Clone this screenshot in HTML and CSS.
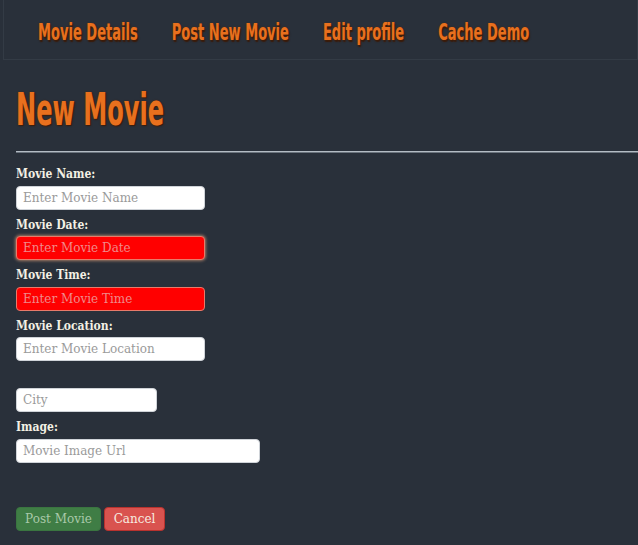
FILE: index.html
```html
<!DOCTYPE html>
<html>
<head>
<meta charset="utf-8">
<link rel="stylesheet" href="styles.css">
</head>
<body>
<nav class="navbar">
  <a class="nav-link"><span>Movie Details</span></a>
  <a class="nav-link"><span>Post New Movie</span></a>
  <a class="nav-link"><span>Edit profile</span></a>
  <a class="nav-link"><span>Cache Demo</span></a>
</nav>
<h1 class="title"><span>New Movie</span></h1>
<hr class="divider">
<form class="movie-form">
  <label class="field-label">Movie Name:</label>
  <input class="field" type="text" placeholder="Enter Movie Name">
  <label class="field-label">Movie Date:</label>
  <input class="field invalid glow" type="text" placeholder="Enter Movie Date">
  <label class="field-label">Movie Time:</label>
  <input class="field invalid" type="text" placeholder="Enter Movie Time">
  <label class="field-label">Movie Location:</label>
  <input class="field" type="text" placeholder="Enter Movie Location">
  <label class="field-label"></label>
  <input class="field city" type="text" placeholder="City">
  <label class="field-label">Image:</label>
  <input class="field wide" type="text" placeholder="Movie Image Url">
  <div class="actions">
    <button type="button" class="btn btn-post">Post Movie</button>
    <button type="button" class="btn btn-cancel">Cancel</button>
  </div>
</form>
</body>
</html>
```
FILE: styles.css
```css
html, body {
  margin: 0;
  padding: 0;
  background: #29303a;
}
body {
  font-family: "DejaVu Serif", "Liberation Serif", serif;
  color: #f1eee2;
  width: 638px;
  overflow: hidden;
}
.navbar {
  margin-left: 3px;
  height: 60px;
  border: 1px solid #333b45;
  border-top: none;
  display: flex;
  align-items: center;
  gap: 34px;
  padding-left: 34px;
  box-sizing: border-box;
}
.nav-link span,
.title span {
  display: inline-block;
  white-space: nowrap;
  font-family: "DejaVu Sans Condensed", "DejaVu Sans", sans-serif;
  font-weight: bold;
  color: #e8701e;
  text-shadow: 0 0 1px #5c2806, 1px 1px 1px #3a1a08;
}
.nav-link span {
  font-size: 14.5px;
  line-height: 24px;
  transform: scaleY(1.62);
  margin-top: 5px;
}
.title {
  margin: 30px 0 0 16px;
  font-size: 26.8px;
  line-height: 40px;
  font-weight: bold;
}
.title span {
  transform: scaleY(1.63);
}
.divider {
  margin: 21px 0 12px 16px;
  border: none;
  border-top: 1px solid #b4bcc4;
  border-bottom: 1px solid #6b747e;
  height: 0;
}
.movie-form {
  display: flex;
  flex-direction: column;
  align-items: flex-start;
  padding-left: 16px;
}
.field-label {
  display: block;
  height: 18.6px;
  line-height: 18px;
  font-family: "DejaVu Serif Condensed", "DejaVu Serif", serif;
  font-size: 12px;
  font-weight: bold;
  margin-bottom: 2px;
  color: #f3f0e4;
  white-space: nowrap;
}
.field {
  width: 189px;
  height: 24px;
  box-sizing: border-box;
  border: 1px solid #cfd3d8;
  border-radius: 4px;
  background: #ffffff;
  padding: 0 6px;
  font-family: "DejaVu Serif", "Liberation Serif", serif;
  font-size: 12px;
  margin: 0 0 6px 0;
  outline: none;
}
.field::placeholder {
  color: #9a9a9a;
}
.field.invalid {
  background: #ff0000;
  border-color: #e87a6a;
}
.field.invalid::placeholder {
  color: #f08a8a;
}
.field.glow {
  box-shadow: 0 0 3px 1px rgba(240, 170, 130, 0.6);
}
.field.city {
  width: 141px;
}
.field.wide {
  width: 244px;
}
.actions {
  display: flex;
  gap: 3px;
  margin-top: 38px;
}
.btn {
  height: 24px;
  padding: 0;
  border-radius: 4px;
  font-family: "DejaVu Serif", "Liberation Serif", serif;
  font-size: 12px;
  border: 1px solid transparent;
  white-space: nowrap;
  text-align: center;
  cursor: pointer;
}
.btn-post {
  background: #3f7d45;
  border-color: #3a7540;
  color: #a9c9a9;
  width: 85px;
}
.btn-cancel {
  background: #d9534f;
  border-color: #b8322e;
  color: #f7ece0;
  width: 61px;
}
```
